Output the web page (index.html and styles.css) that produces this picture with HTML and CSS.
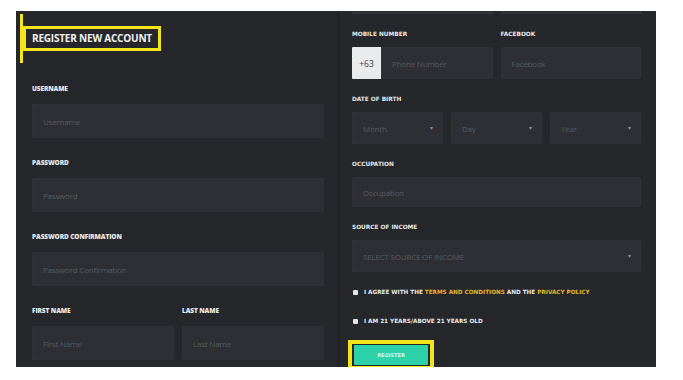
FILE: index.html
```html
<!DOCTYPE html>
<html lang="en">
<head>
  <meta charset="UTF-8">
  <meta name="viewport" content="width=device-width, initial-scale=1.0">
  <title>Register New Account</title>
  <link rel="stylesheet" href="styles.css">
</head>
<body>
  <div class="sheet">
    <!-- left half: account details -->
    <div class="col col-left">
      <div class="head">
        <h1 class="title">REGISTER NEW ACCOUNT</h1>
      </div>
      <div class="fields">
        <div class="field">
          <label>USERNAME</label>
          <input type="text" placeholder="Username">
        </div>
        <div class="field">
          <label>PASSWORD</label>
          <input type="password" placeholder="Password">
        </div>
        <div class="field">
          <label>PASSWORD CONFIRMATION</label>
          <input type="password" placeholder="Password Confirmation">
        </div>
        <div class="row">
          <div class="field">
            <label>FIRST NAME</label>
            <input type="text" placeholder="First Name">
          </div>
          <div class="field">
            <label>LAST NAME</label>
            <input type="text" placeholder="Last Name">
          </div>
        </div>
      </div>
    </div>

    <div class="divider"></div>

    <!-- right half: personal details -->
    <div class="col col-right">
      <div class="cut-row">
        <span></span>
        <span></span>
      </div>

      <div class="row-r">
        <div class="rfield">
          <label>MOBILE NUMBER</label>
          <div class="phone">
            <span class="prefix">+63</span>
            <input type="text" placeholder="Phone Number">
          </div>
        </div>
        <div class="rfield">
          <label>FACEBOOK</label>
          <input type="text" placeholder="Facebook">
        </div>
      </div>

      <div class="rfield">
        <label>DATE OF BIRTH</label>
        <div class="dob">
          <div class="select"><span>Month</span><i>&#9662;</i></div>
          <div class="select"><span>Day</span><i>&#9662;</i></div>
          <div class="select"><span>Year</span><i>&#9662;</i></div>
        </div>
      </div>

      <div class="rfield">
        <label>OCCUPATION</label>
        <input type="text" class="short" placeholder="Occupation">
      </div>

      <div class="rfield">
        <label>SOURCE OF INCOME</label>
        <div class="select"><span>SELECT SOURCE OF INCOME</span><i>&#9662;</i></div>
      </div>

      <div class="check">
        <span class="box"></span>
        <span>I AGREE WITH THE <a href="#">TERMS AND CONDITIONS</a> AND THE <a href="#">PRIVACY POLICY</a></span>
      </div>
      <div class="check">
        <span class="box"></span>
        <span>I AM 21 YEARS/ABOVE 21 YEARS OLD</span>
      </div>

      <div class="register-wrap">
        <button class="register-btn">REGISTER</button>
      </div>
    </div>
  </div>
</body>
</html>
```

FILE: styles.css
```css
body {
  margin: 0;
  padding: 0;
  background: #ffffff;
  font-family: "Open Sans", Arial, sans-serif;
}
.sheet {
  display: flex;
  width: 640px;
  height: 356px;
  margin: 11px 0 0 16px;
  background-color: #25272b;
  overflow: hidden;
}
.col-left {
  width: 321px;
}
.divider {
  width: 3px;
  background: #202226;
}
.col-right {
  width: 316px;
  padding: 0 15px 0 12px;
  box-sizing: border-box;
}

/* header */
.head {
  margin: 3px 0 0 4px;
  height: 49px;
  border-left: 3px solid #f3e51a;
  padding-top: 11px;
  box-sizing: border-box;
}
.title {
  display: inline-block;
  margin: 0;
  padding: 0 6px;
  border: 3px solid #f3e51a;
  line-height: 19px;
  font-size: 10px;
  font-weight: 700;
  color: #f2f2f2;
  letter-spacing: -0.2px;
}

/* left fields */
.fields {
  padding: 21px 13px 0 16px;
}
.field label {
  display: block;
  line-height: 10px;
  margin-bottom: 10px;
  font-size: 6.5px;
  font-weight: 800;
  color: #e9e9e9;
  letter-spacing: -0.1px;
}
.field {
  margin-bottom: 20px;
}
input {
  display: block;
  width: 100%;
  height: 34px;
  box-sizing: border-box;
  padding: 0 10px;
  margin: 0;
  background: #2d2f34;
  border: 1px solid #303237;
  border-radius: 1px;
  color: #cccccc;
  font-family: "Open Sans", Arial, sans-serif;
  font-size: 8px;
  letter-spacing: -0.2px;
  outline: none;
}
input::placeholder {
  color: #575a60;
}
.row {
  display: flex;
  gap: 8px;
}
.row .field {
  flex: 1;
}

/* right fields */
.cut-row {
  display: flex;
  gap: 8px;
  height: 3px;
}
.cut-row span {
  flex: 1;
  background: #2d2f34;
  border: 1px solid #34363b;
  border-top: none;
}
.row-r {
  display: flex;
  gap: 8px;
  margin-top: 15px;
}
.row-r .rfield {
  flex: 1;
}
.rfield {
  margin-bottom: 15px;
}
.rfield label {
  display: block;
  line-height: 10px;
  margin-bottom: 8px;
  font-family: "DejaVu Sans", Verdana, sans-serif;
  font-size: 5.8px;
  font-weight: 700;
  color: #e9e9e9;
}
.rfield input {
  height: 32px;
}
.rfield input.short {
  height: 30px;
}
.phone {
  display: flex;
  height: 32px;
}
.prefix {
  width: 29px;
  flex-shrink: 0;
  display: flex;
  align-items: center;
  justify-content: center;
  background: #e9eaec;
  color: #3e4044;
  font-size: 8.5px;
  border-radius: 1px 0 0 1px;
}
.phone input {
  flex: 1;
  min-width: 0;
}
.dob {
  display: flex;
  gap: 8px;
}
.dob .select {
  flex: 1;
}
.select {
  display: flex;
  align-items: center;
  justify-content: space-between;
  height: 32px;
  box-sizing: border-box;
  padding: 0 9px 0 10px;
  background: #2d2f34;
  border: 1px solid #303237;
  border-radius: 1px;
  color: #575a60;
  font-size: 8px;
  letter-spacing: -0.2px;
}
.select i {
  font-style: normal;
  font-size: 6px;
  color: #8c8e92;
}

/* checks */
.check {
  display: flex;
  align-items: center;
  gap: 6px;
  height: 10px;
  margin: 13px 0 0 1px;
  font-family: "DejaVu Sans", Verdana, sans-serif;
  font-size: 5.7px;
  font-weight: 700;
  color: #e9e9e9;
  white-space: nowrap;
}
.check + .check {
  margin-top: 19px;
}
.check a {
  color: #e2b52a;
  text-decoration: none;
}
.box {
  width: 5px;
  height: 5px;
  flex-shrink: 0;
  background: #e6e6e6;
  border-radius: 1px;
}
.register-wrap {
  display: inline-block;
  margin: 14px 0 0 -4px;
  border: 4px solid #f3e51a;
  padding: 1px 2px;
}
.register-btn {
  display: block;
  width: 74px;
  height: 20px;
  border: none;
  border-radius: 1px;
  background: #2ed2aa;
  color: #d8f5ec;
  font-family: "DejaVu Sans", Verdana, sans-serif;
  font-size: 5px;
  font-weight: 700;
  cursor: pointer;
}
```
